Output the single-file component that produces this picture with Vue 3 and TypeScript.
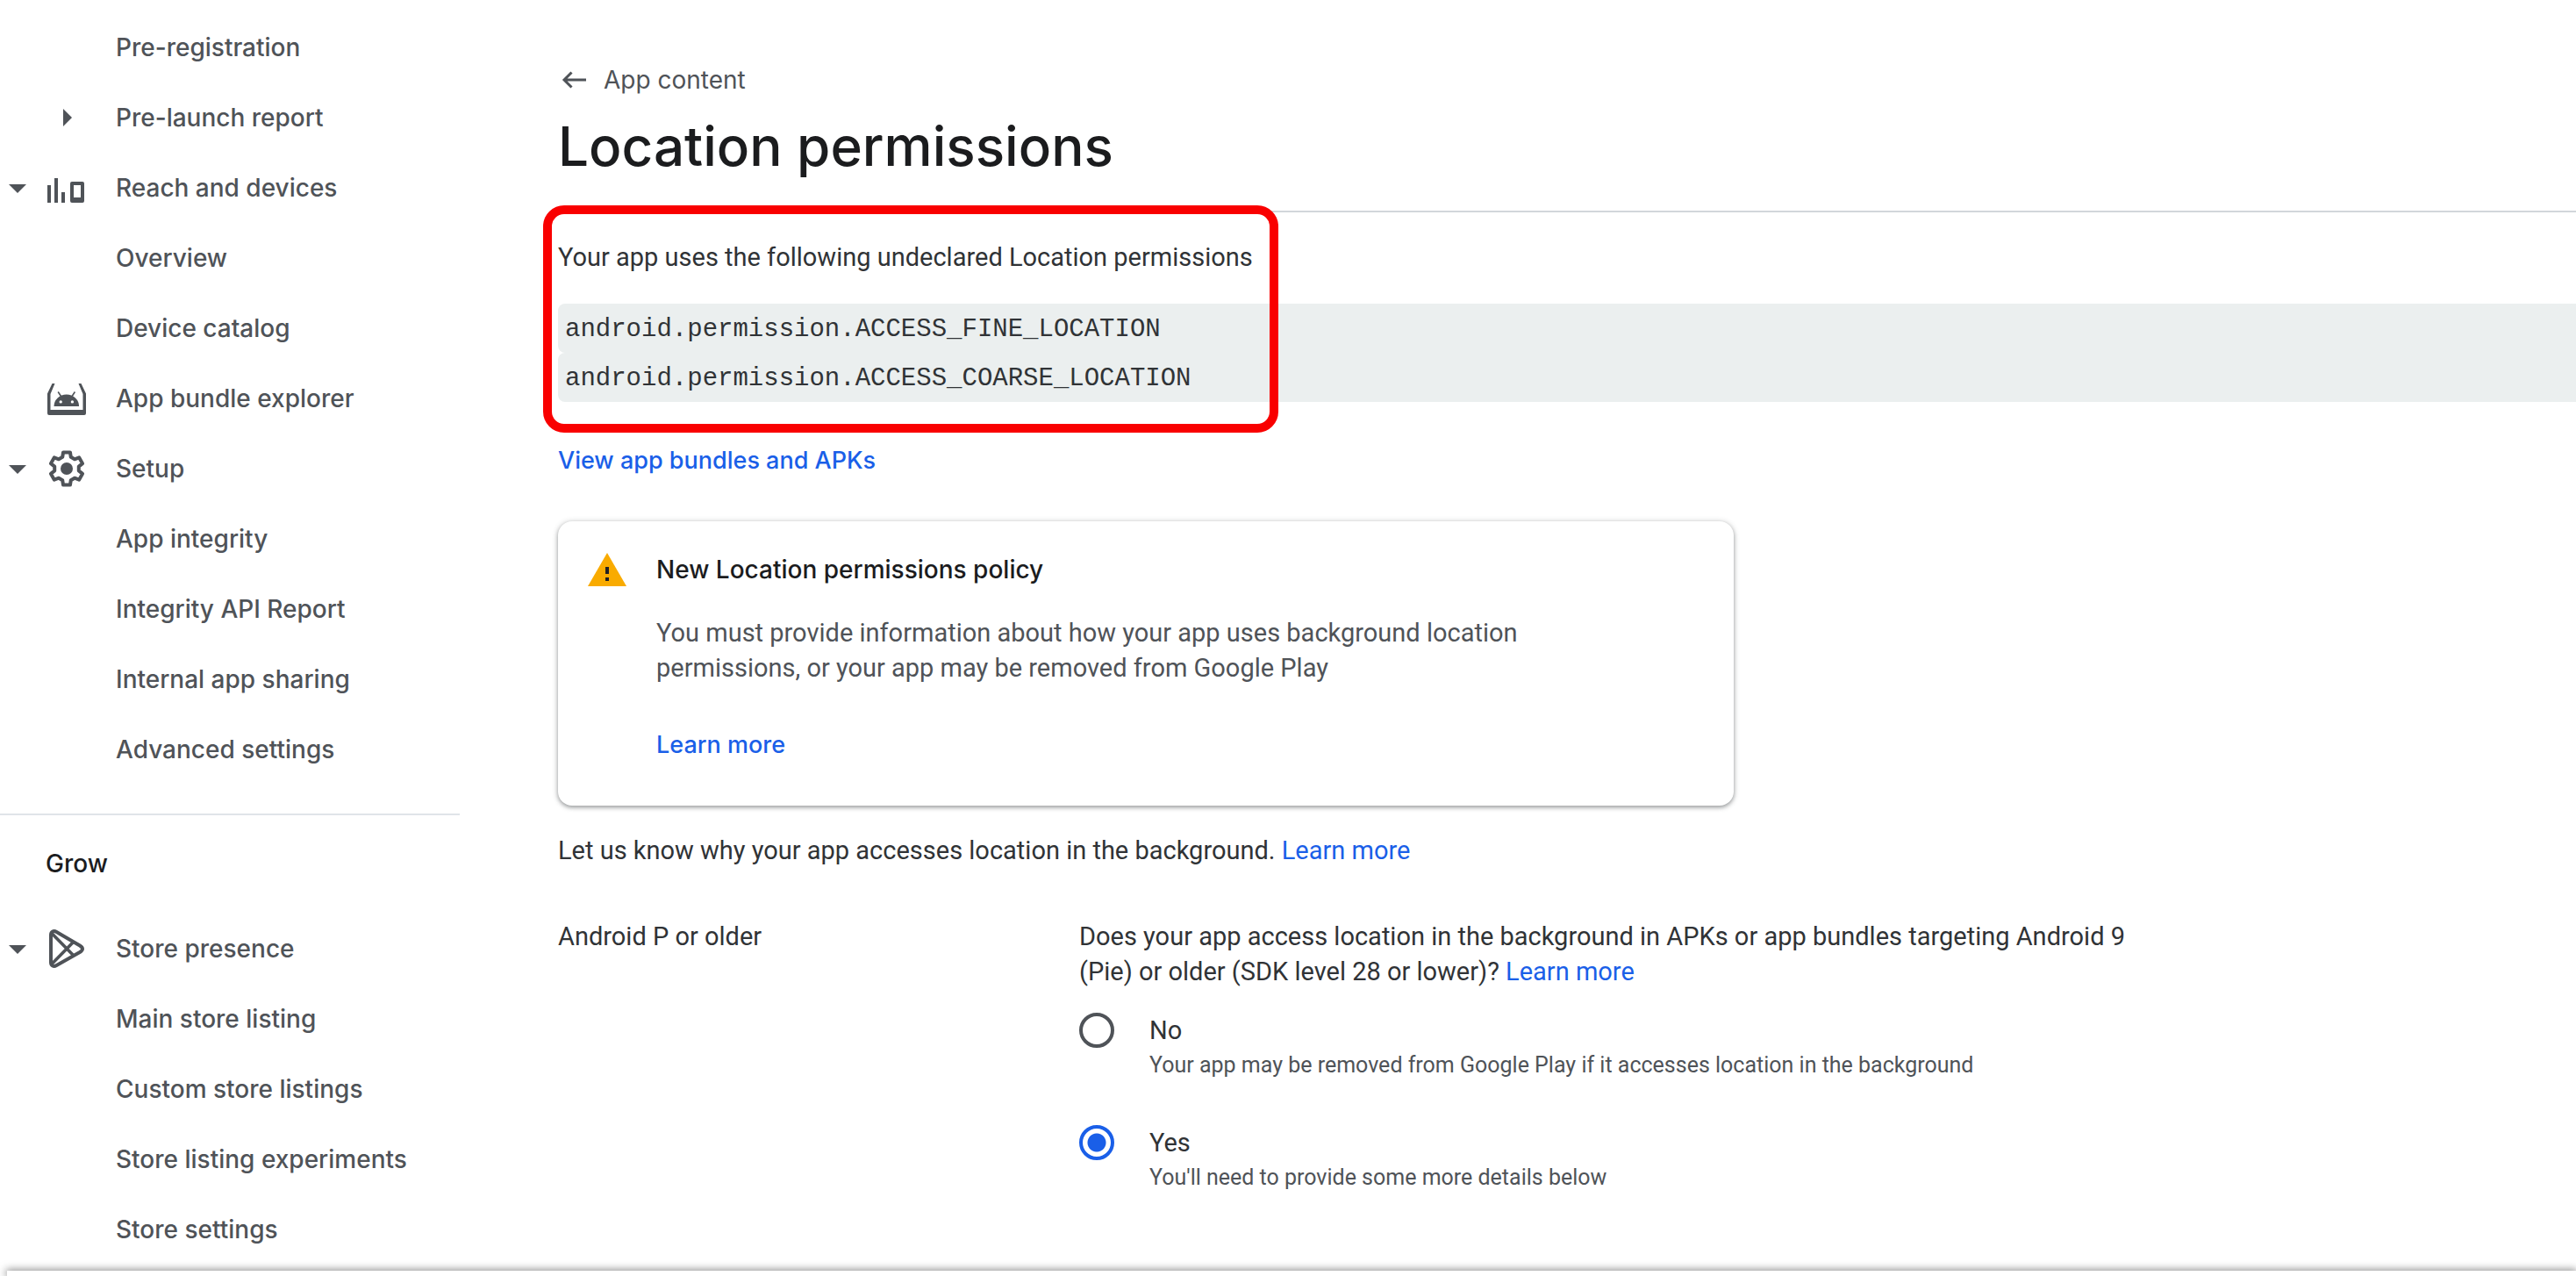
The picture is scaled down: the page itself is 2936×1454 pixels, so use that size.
<script setup lang="ts">
import { ref } from 'vue'

type IconName = 'reach' | 'bundle' | 'gear' | 'play'

interface NavItem {
  label: string
  caret?: 'open' | 'closed'
  icon?: IconName
}

const releaseItems: NavItem[] = [
  { label: 'Pre-registration' },
  { label: 'Pre-launch report', caret: 'closed' },
  { label: 'Reach and devices', caret: 'open', icon: 'reach' },
  { label: 'Overview' },
  { label: 'Device catalog' },
  { label: 'App bundle explorer', icon: 'bundle' },
  { label: 'Setup', caret: 'open', icon: 'gear' },
  { label: 'App integrity' },
  { label: 'Integrity API Report' },
  { label: 'Internal app sharing' },
  { label: 'Advanced settings' },
]

const growItems: NavItem[] = [
  { label: 'Store presence', caret: 'open', icon: 'play' },
  { label: 'Main store listing' },
  { label: 'Custom store listings' },
  { label: 'Store listing experiments' },
  { label: 'Store settings' },
]

const sections = [
  { title: '', items: releaseItems },
  { title: 'Grow', items: growItems },
]

const permissions = [
  'android.permission.ACCESS_FINE_LOCATION',
  'android.permission.ACCESS_COARSE_LOCATION',
]

const options = [
  {
    value: 'no',
    label: 'No',
    hint: 'Your app may be removed from Google Play if it accesses location in the background',
  },
  { value: 'yes', label: 'Yes', hint: "You'll need to provide some more details below" },
]
const answer = ref('yes')

// Outline of a six-toothed gear centred in a 48x48 box.
const corners: [number, number][] = [
  [-20, 14],
  [-12, 19],
  [12, 19],
  [20, 14],
]
const gearPoints = [0, 60, 120, 180, 240, 300]
  .flatMap((tooth) =>
    corners.map(([offset, radius]) => {
      const a = ((tooth + offset) * Math.PI) / 180
      return `${(24 + radius * Math.sin(a)).toFixed(2)},${(24 - radius * Math.cos(a)).toFixed(2)}`
    }),
  )
  .join(' ')
</script>

<template>
  <div class="page">
    <nav class="sidebar" aria-label="Console">
      <section v-for="section in sections" :key="section.title" class="group">
        <h2 v-if="section.title" class="group-title">{{ section.title }}</h2>
        <ul class="list">
          <li v-for="item in section.items" :key="item.label">
            <a href="#" class="nav-link">
              <span class="caret-slot">
                <svg v-if="item.caret === 'open'" class="icon" viewBox="0 0 24 24" aria-hidden="true">
                  <path d="M7 10l5 5 5-5z" fill="currentColor" />
                </svg>
              </span>
              <span class="icon-slot">
                <svg v-if="item.caret === 'closed'" class="icon" viewBox="0 0 24 24" aria-hidden="true">
                  <path d="M10 17l5-5-5-5z" fill="currentColor" />
                </svg>
                <svg v-else-if="item.icon === 'reach'" class="icon" viewBox="0 0 48 48" aria-hidden="true">
                  <path
                    fill="currentColor"
                    fill-rule="evenodd"
                    d="M2 21h4v20H2zM10 13h4v28h-4zM18 29h4v12h-4zM30 17h12a2 2 0 0 1 2 2v20a2 2 0 0 1-2 2H30a2 2 0 0 1-2-2V19a2 2 0 0 1 2-2zM32 21v14h8V21z"
                  />
                </svg>
                <svg v-else-if="item.icon === 'bundle'" class="icon" viewBox="0 0 48 48" aria-hidden="true">
                  <path
                    fill="currentColor"
                    d="M7.500 7h3L5.500 19v18h37V19L37.500 7h3L46 18.500V41a2 2 0 0 1-2 2H4a2 2 0 0 1-2-2V18.500z"
                  />
                  <path
                    fill="currentColor"
                    fill-rule="evenodd"
                    d="M9.500 33a14.300 13.500 0 0 1 28.600 0zM17.200 26.200a1.700 1.700 0 1 0 0 3.400 1.700 1.700 0 0 0 0-3.400zM30.400 26.200a1.700 1.700 0 1 0 0 3.400 1.700 1.700 0 0 0 0-3.400z"
                  />
                  <path d="M14.200 16.500l3.300 5M33.400 16.500l-3.300 5" stroke="currentColor" stroke-width="1.600" />
                </svg>
                <svg v-else-if="item.icon === 'gear'" class="icon" viewBox="0 0 48 48" aria-hidden="true">
                  <polygon
                    :points="gearPoints"
                    fill="none"
                    stroke="currentColor"
                    stroke-width="4"
                    stroke-linejoin="round"
                  />
                  <circle cx="24" cy="24" r="7" fill="currentColor" />
                </svg>
                <svg v-else-if="item.icon === 'play'" class="icon" viewBox="0 0 48 48" aria-hidden="true">
                  <path
                    fill="none"
                    stroke="currentColor"
                    stroke-width="4"
                    stroke-linejoin="round"
                    d="M6 8.500c0-4 3-5.500 6.500-3.500L39 20.500c4 2.500 4 5 0 7.500L12.500 43c-3.500 2-6.500 .500-6.500-3.500z"
                  />
                  <path
                    fill="none"
                    stroke="currentColor"
                    stroke-width="3.600"
                    d="M7 6.500L32 32M7 41.500L32 16"
                  />
                </svg>
              </span>
              <span>{{ item.label }}</span>
            </a>
          </li>
        </ul>
      </section>
    </nav>

    <main class="content">
      <a href="#" class="back">
        <svg class="back-icon" viewBox="0 0 36 36" aria-hidden="true">
          <path
            d="M32 18H7M15.500 9.500L7 18l8.500 8.500"
            fill="none"
            stroke="currentColor"
            stroke-width="3"
          />
        </svg>
        <span>App content</span>
      </a>
      <h1 class="title">Location permissions</h1>

      <section class="notice">
        <p>Your app uses the following undeclared Location permissions</p>
        <div class="codes">
          <code v-for="name in permissions" :key="name" class="code">{{ name }}</code>
        </div>
        <div class="highlight" aria-hidden="true"></div>
      </section>

      <a href="#" class="link strong bundles">View app bundles and APKs</a>

      <section class="card">
        <svg class="warning" viewBox="0 0 48 48" aria-hidden="true">
          <path d="M2 43L24 5l22 38z" fill="#f9ab00" />
          <path d="M22 21h4v8h-4zM22 33h4v4h-4z" fill="#202124" />
        </svg>
        <div>
          <h2 class="card-title">New Location permissions policy</h2>
          <p class="card-text">
            You must provide information about how your app uses background location permissions, or
            your app may be removed from Google Play
          </p>
          <a href="#" class="link strong">Learn more</a>
        </div>
      </section>

      <p class="intro">
        Let us know why your app accesses location in the background.
        <a href="#" class="link">Learn more</a>
      </p>

      <div class="question">
        <p id="question-name" class="question-name">Android P or older</p>
        <div class="question-body" role="radiogroup" aria-labelledby="question-name">
          <p>
            Does your app access location in the background in APKs or app bundles targeting Android 9
            (Pie) or older (SDK level 28 or lower)?
            <a href="#" class="link">Learn more</a>
          </p>
          <div class="options">
            <label v-for="option in options" :key="option.value" class="option">
              <input v-model="answer" class="radio" type="radio" name="background" :value="option.value" />
              <span>
                <span class="option-label">{{ option.label }}</span>
                <span class="option-hint">{{ option.hint }}</span>
              </span>
            </label>
          </div>
        </div>
      </div>
    </main>

    <div class="bottom-bar"></div>
  </div>
</template>

<style>
body {
  margin: 0;
  background: #fff;
}
</style>

<style scoped>
.page {
  position: relative;
  display: flex;
  height: 100vh;
  overflow: hidden;
  background: #fff;
  color: #303336;
  font: 400 29px/40px Roboto, sans-serif;
}

h1,
h2,
p,
ul {
  margin: 0;
  padding: 0;
}

a {
  text-decoration: none;
}

svg {
  display: block;
}

.sidebar {
  flex: 0 0 524px;
  padding-top: 14px;
  color: #4f5358;
  font: 500 28px/40px Inter, sans-serif;
}

.group + .group {
  margin-top: 33px;
  padding-top: 35px;
  border-top: 2px solid #e0e4e9;
}

.group-title {
  margin-bottom: 37px;
  padding-left: 52px;
  color: #1b1c1e;
  font: inherit;
}

.list {
  list-style: none;
}

.nav-link {
  display: flex;
  align-items: center;
  height: 80px;
  color: inherit;
}

.caret-slot {
  display: flex;
  flex: 0 0 52px;
  justify-content: center;
  min-width: 0;
  padding-right: 12px;
  box-sizing: border-box;
}

.icon-slot {
  flex: 0 0 80px;
}

.icon {
  flex: none;
  width: 48px;
  height: 48px;
}

.content {
  flex: 1;
  min-width: 0;
  margin-left: 112px;
  padding-top: 71px;
}

.back {
  display: inline-flex;
  align-items: center;
  gap: 16px;
  color: #4f5358;
  font: 400 28px/40px Inter, sans-serif;
  vertical-align: top;
}

.back-icon {
  width: 36px;
  height: 36px;
}

.title {
  margin-top: 16px;
  color: #1b1c1e;
  font: 500 62px/80px Inter, sans-serif;
}

.notice {
  position: relative;
  margin-top: 33px;
  padding-top: 31px;
  border-top: 2px solid #d2d6db;
}

.codes {
  margin-top: 33px;
}

.code {
  display: block;
  padding: 10px 8px 6px;
  border-radius: 8px 0 0 8px;
  background: #ebefef;
  font: 29px/40px "Liberation Mono", monospace;
}

.highlight {
  position: absolute;
  top: -8px;
  bottom: -35px;
  left: -17px;
  width: 838px;
  box-sizing: border-box;
  border: 10px solid #f90000;
  border-radius: 24px;
}

.link {
  color: #1a5fe8;
}

.strong {
  display: table;
  font: 500 27px/40px Inter, sans-serif;
}

.bundles {
  margin-top: 47px;
}

.card {
  display: flex;
  gap: 32px;
  max-width: 1340px;
  box-sizing: border-box;
  margin-top: 49px;
  padding: 35px 32px 49px;
  border-radius: 16px;
  box-shadow: 0 2px 4px rgba(60, 64, 67, 0.4), 0 1px 6px 1px rgba(60, 64, 67, 0.2);
}

.warning {
  flex: none;
  width: 48px;
  height: 48px;
  margin-top: -4px;
}

.card-title {
  color: #1b1c1e;
  font: 500 28px/40px Inter, sans-serif;
}

.card-text {
  max-width: 1000px;
  margin: 32px 0 48px;
  color: #4f5358;
}

.intro {
  margin-top: 31px;
}

.question {
  display: flex;
  margin-top: 58px;
}

.question-name {
  flex: 0 0 594px;
}

.question-body {
  max-width: 1200px;
}

.options {
  display: grid;
  gap: 48px;
  margin-top: 27px;
}

.option {
  display: flex;
  gap: 40px;
}

.radio {
  appearance: none;
  flex: none;
  width: 40px;
  height: 40px;
  margin: 0;
  border: 4px solid #4f5358;
  border-radius: 50%;
}

.radio:checked {
  border-color: #1a5fe8;
  background: radial-gradient(circle, #1a5fe8 10px, transparent 11px);
}

.option-label,
.option-hint {
  display: block;
}

.option-hint {
  color: #4f5358;
  font-size: 25px;
}

.bottom-bar {
  position: absolute;
  right: 0;
  bottom: 0;
  left: 8px;
  height: 6px;
  background: #fff;
  box-shadow: 0 0 10px 1px rgba(0, 0, 0, 0.5);
}
</style>
